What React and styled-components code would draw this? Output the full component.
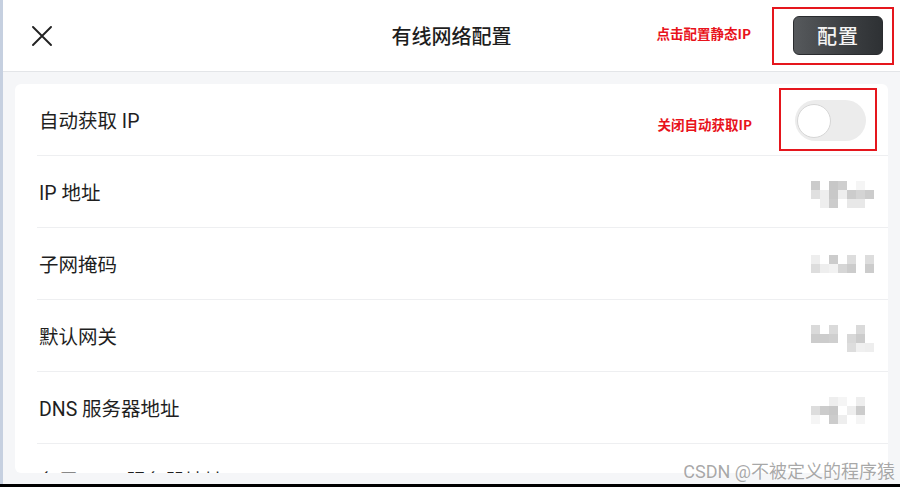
import React from "react";
import styled, { createGlobalStyle } from "styled-components";

const GlobalStyle = createGlobalStyle`
  html, body {
    margin: 0;
    padding: 0;
    background: #000;
  }
  body {
    font-family: "Roboto", "Noto Sans CJK SC", sans-serif;
  }
`;

const Screen = styled.div`
  width: 900px;
  height: 487px;
  display: flex;
  flex-direction: column;
  background: #000;
  overflow: hidden;
  position: relative;
`;

const Body = styled.div`
  display: flex;
  height: 484px;
`;

const EdgeStrip = styled.div`
  width: 3px;
  background: #c6d0e0;
  flex-shrink: 0;
`;

const Main = styled.div`
  flex: 1;
  display: flex;
  flex-direction: column;
  background: #f5f6f8;
  min-width: 0;
`;

const Header = styled.header`
  height: 71px;
  border-bottom: 1px solid #e3e5e8;
  background: #fff;
  display: grid;
  grid-template-columns: 1fr auto 1fr;
  align-items: center;
`;

const CloseButton = styled.button`
  justify-self: start;
  margin-left: 29px;
  width: 20px;
  height: 20px;
  padding: 0;
  border: none;
  background: none;
  display: flex;
  color: #222;
`;

const Title = styled.h1`
  margin: 0;
  font-family: "Noto Sans CJK SC", sans-serif;
  font-size: 20px;
  font-weight: 500;
  color: #1e1e1e;
`;

const HeaderRight = styled.div`
  justify-self: end;
  margin-right: 6px;
  display: flex;
  align-items: center;
  gap: 21px;
`;

const Note = styled.span`
  font-family: "Noto Sans CJK SC", sans-serif;
  font-size: 13.5px;
  font-weight: 700;
  color: #e8131b;
  transform: translateY(${(p) => p.$shift}px);
`;

const Outline = styled.div`
  border: 2px solid #e5161d;
  padding: ${(p) => p.$pad};
  display: flex;
`;

const ConfigButton = styled.button`
  width: 90px;
  height: 39px;
  border: 1px solid #2a2c2f;
  border-radius: 6px;
  background: linear-gradient(90deg, #56595c 0%, #3c3f42 60%, #2e3134 100%);
  color: #f4f4f4;
  font-family: "Noto Sans CJK SC", sans-serif;
  font-size: 20px;
  font-weight: 500;
  letter-spacing: 1px;
`;

const Content = styled.div`
  flex: 1;
  padding: 12px 12px 11px 12px;
  display: flex;
  min-height: 0;
`;

const Card = styled.div`
  flex: 1;
  background: #fff;
  border-radius: 6px;
  overflow: hidden;
`;

const Row = styled.div`
  height: 71px;
  margin-left: 22px;
  padding-right: 14px;
  border-bottom: 1px solid #eeeff1;
  display: flex;
  align-items: center;
  justify-content: space-between;
`;

const Label = styled.span`
  font-family: "Roboto", "Noto Sans CJK SC", sans-serif;
  font-size: 19.5px;
  color: #1f1f1f;
  padding-left: 2px;
`;

const RowRight = styled.div`
  display: flex;
  align-items: center;
  gap: 27px;
  margin-right: -3px;
`;

const Toggle = styled.div`
  width: 71px;
  height: 41px;
  border-radius: 21px;
  background: #ececec;
  display: flex;
  align-items: center;
  padding-left: 2px;
  box-sizing: border-box;
`;

const Knob = styled.div`
  width: 34px;
  height: 34px;
  border-radius: 50%;
  background: #fff;
  border: 1px solid #d6d6d6;
  box-sizing: border-box;
`;

const Mosaic = styled.div`
  display: grid;
  grid-template-columns: repeat(7, 9px);
  grid-auto-rows: 9px;
  margin-top: ${(p) => p.$offset}px;
`;

const Cell = styled.div`
  background: ${(p) => p.$c};
`;

const BottomBar = styled.div`
  height: 3px;
  background: #000;
`;

const Watermark = styled.div`
  position: absolute;
  right: 5px;
  bottom: 5px;
  font-family: "Roboto", "Noto Sans CJK SC", sans-serif;
  font-size: 18px;
  line-height: 21px;
  color: rgba(140, 140, 140, 0.75);
  text-shadow: 0 0 2px rgba(255, 255, 255, 0.8);
  white-space: nowrap;
`;

const W = "#ffffff";

const mosaics = {
  ip: [
    ["#cbcbcb", W, "#c7c7c7", "#cecece", W, "#f5f5f5", W],
    ["#e0e0e0", "#eeeeee", "#c8c8c8", "#eeeeee", "#cccccc", "#d4d4d4", "#cccccc"],
    [W, "#eeeeee", "#cccccc", W, "#e8e8e8", "#e8e8e8", W],
  ],
  mask: [
    ["#eeeeee", W, "#cccccc", W, "#dddddd", W, "#dddddd"],
    ["#dddddd", "#eeeeee", "#f2f2f2", "#d6d6d6", "#cccccc", W, "#cccccc"],
  ],
  gateway: [
    ["#dadada", W, "#dadada", W, W, "#dadada", W],
    ["#cccccc", "#cccccc", "#cfcfcf", W, "#d8d8d8", "#cccccc", W],
    [W, W, W, W, "#dddddd", "#f0f0f0", "#eeeeee"],
  ],
  dns: [
    [W, W, "#eeeeee", "#f5f5f5", W, "#eeeeee", W],
    ["#dddddd", "#cccccc", "#c8c8c8", W, "#eeeeee", "#cccccc", W],
    ["#f5f5f5", W, "#cccccc", "#eeeeee", W, "#f5f5f5", W],
  ],
};

function Blurred({ rows }) {
  return (
    <Mosaic $offset={rows.length > 2 ? 6 : 0}>
      {rows.flat().map((c, i) => (
        <Cell key={i} $c={c} />
      ))}
    </Mosaic>
  );
}

const items = [
  { label: "IP 地址", value: mosaics.ip },
  { label: "子网掩码", value: mosaics.mask },
  { label: "默认网关", value: mosaics.gateway },
  { label: "DNS 服务器地址", value: mosaics.dns },
  { label: "备用 DNS 服务器地址", value: null },
];

export default function App() {
  return (
    <>
      <GlobalStyle />
      <Screen>
        <Body>
          <EdgeStrip />
          <Main>
            <Header>
              <CloseButton aria-label="关闭">
                <svg width="20" height="20" viewBox="0 0 20 20">
                  <path
                    d="M1 1 L19 19 M19 1 L1 19"
                    stroke="currentColor"
                    strokeWidth="1.9"
                    strokeLinecap="round"
                  />
                </svg>
              </CloseButton>
              <Title>有线网络配置</Title>
              <HeaderRight>
                <Note $shift={-3}>点击配置静态IP</Note>
                <Outline $pad="7px 9px 8px 19px">
                  <ConfigButton>配置</ConfigButton>
                </Outline>
              </HeaderRight>
            </Header>
            <Content>
              <Card>
                <Row>
                  <Label>自动获取 IP</Label>
                  <RowRight>
                    <Note $shift={4}>关闭自动获取IP</Note>
                    <Outline $pad="10px 9px 8px 14px">
                      <Toggle>
                        <Knob />
                      </Toggle>
                    </Outline>
                  </RowRight>
                </Row>
                {items.map((it) => (
                  <Row key={it.label}>
                    <Label>{it.label}</Label>
                    {it.value && <Blurred rows={it.value} />}
                  </Row>
                ))}
              </Card>
            </Content>
          </Main>
        </Body>
        <BottomBar />
        <Watermark>CSDN @不被定义的程序猿</Watermark>
      </Screen>
    </>
  );
}
